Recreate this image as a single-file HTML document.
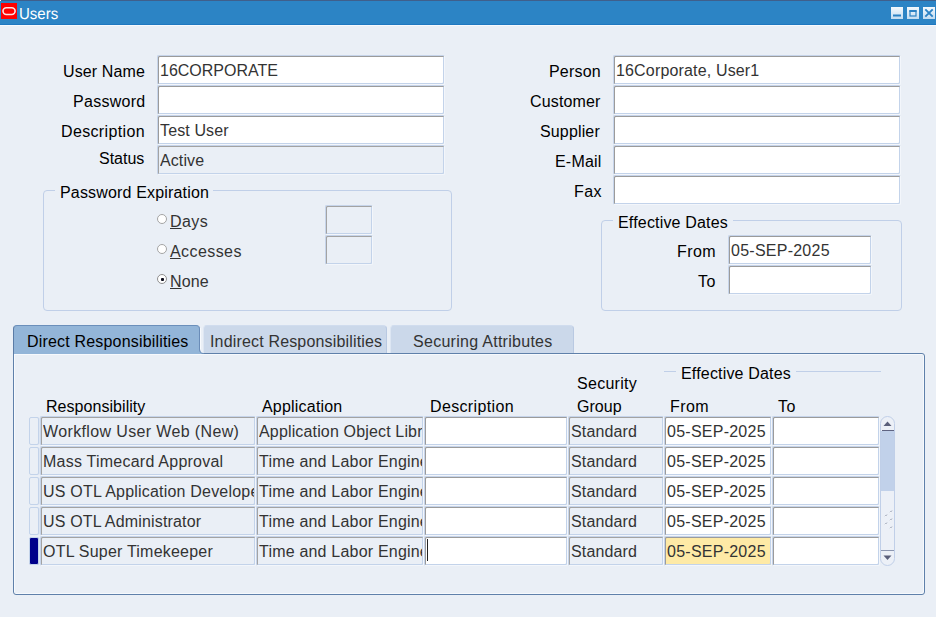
<!DOCTYPE html>
<html><head><meta charset="utf-8">
<style>
html,body{margin:0;padding:0;}
body{width:936px;height:617px;overflow:hidden;background:#eaeff6;font-family:"Liberation Sans",Arial,sans-serif;font-size:16px;color:#000;position:relative;}
.abs,.f,.l{position:absolute;}
#title{left:0;top:0;width:936px;height:25px;background:#2c84c5;border-top:1px solid #3f5f8c;border-bottom:1px solid #1f78c0;box-sizing:border-box;}
#titleline{left:0;top:25px;width:936px;height:1px;background:#f6f9fd;}
#title .txt{position:absolute;left:19px;top:4px;color:#fff;font-size:15px;line-height:18px;transform:rotate(0.03deg) scaleY(1.06);transform-origin:0 14px;}
.f{box-sizing:border-box;height:30px;border:1px solid;border-color:#c6d4ea #f3f6fb #f3f6fb #c6d4ea;border-radius:2px;background:#fff;color:#333;line-height:18px;padding:6px 0 0 2px;white-space:nowrap;overflow:hidden;box-shadow:inset 1px 1px 0 #9b9b9b, inset -1px -1px 0 #c3d3ea;}
.f.d{background:#eaeff6;box-shadow:inset 1px 1px 0 #a3a3a3, inset -1px -1px 0 #c3d3ea;}
.f.y{background:#feeaa6;}
.f span{display:block;overflow:hidden;margin-right:1px;}
.l{line-height:18px;white-space:nowrap;}
.grp{position:absolute;box-sizing:border-box;border:1px solid #c0cfe8;border-radius:4px;}
.gap{position:absolute;background:#eaeff6;height:3px;}
.radio{position:absolute;width:10px;height:10px;border:1px solid #a4a4a4;border-radius:50%;background:#fff;box-sizing:border-box;}
.radio.on{border-color:#8f8f8f;}
.radio.on::after{content:"";position:absolute;left:2.500px;top:2.500px;width:3px;height:3px;background:#0a0a1a;border-radius:1px;}
u{text-decoration:underline;letter-spacing:0;}
.tab{position:absolute;top:325px;height:28px;box-sizing:border-box;border:1px solid;border-color:#d0dcee #b9c9e2 #b9c9e2 #dde6f3;border-bottom:none;border-radius:4px 4px 0 0;background:#cbd8ea;}
.tab.act{background:#93b5d8;border-color:#6b8fbb #6a8cb8 #6a8cb8 #5b7ca6;height:29px;}
#panel{position:absolute;left:13px;top:353px;width:912px;height:242px;box-sizing:border-box;border:1px solid #5f80aa;border-radius:0 3px 3px 3px;box-shadow:inset 1px 1px 0 #f6f9fd, inset -1px -1px 0 #f6f9fd;}
.ind{position:absolute;left:29px;width:10px;height:28px;box-sizing:border-box;border:1px solid #c3d3ea;border-radius:2px;background:#eaeff6;box-shadow:1px 0 0 #dde6f3;}
.ind.cur{background:#00008b;}
</style></head><body>
<div class="abs" id="title"><svg class="abs" style="left:0;top:0" width="18" height="20" viewBox="0 0 18 20"><rect x="1" y="2" width="16" height="16" fill="#fe0000"/><rect x="3" y="6.700" width="12.100" height="6.800" rx="3.400" fill="none" stroke="#fbe3e3" stroke-width="1.600"/></svg><span class="txt">Users</span>
<svg class="abs" style="left:891px;top:6px" width="45" height="12" viewBox="0 0 45 12">
<defs><linearGradient id="g" x1="0" y1="0" x2="0" y2="1"><stop offset="0" stop-color="#f4f9fd"/><stop offset="1" stop-color="#c3dcf1"/></linearGradient></defs>
<rect x="0" y="0" width="12" height="12" fill="url(#g)"/><rect x="2" y="7.500" width="8" height="2" fill="#2c82c4"/>
<rect x="16" y="0" width="12" height="12" fill="url(#g)"/><rect x="19" y="4" width="6" height="5" fill="none" stroke="#2c82c4" stroke-width="1.200"/><rect x="18.400" y="3" width="7.200" height="2" fill="#2c82c4"/>
<rect x="32" y="0" width="12" height="12" fill="url(#g)"/><path d="M34.300 2.300 L41.700 9.700 M41.700 2.300 L34.300 9.700" stroke="#2c82c4" stroke-width="1.900" fill="none"/>
</svg>
</div>
<div class="abs" id="titleline"></div>
<div class="abs" style="left:0;top:0;width:1px;height:1px;background:#fff"></div>
<div class="l" style="left:63px;top:63px;letter-spacing:0.125px;">User Name</div>
<div class="l" style="left:73px;top:93px;letter-spacing:0.286px;">Password</div>
<div class="l" style="left:61px;top:123px;letter-spacing:0.35px;">Description</div>
<div class="l" style="left:99px;top:150px;">Status</div>
<div class="f " style="left:157px;top:55px;width:288px"><span>16CORPORATE</span></div>
<div class="f " style="left:157px;top:85px;width:288px"></div>
<div class="f " style="left:157px;top:115px;width:288px"><span style="letter-spacing:0.125px">Test User</span></div>
<div class="f d" style="left:157px;top:145px;width:288px"><span style="letter-spacing:0.1px">Active</span></div>
<div class="l" style="left:549px;top:63px;letter-spacing:0.2px;">Person</div>
<div class="l" style="left:530px;top:93px;letter-spacing:0.15px;">Customer</div>
<div class="l" style="left:540px;top:123px;letter-spacing:0.143px;">Supplier</div>
<div class="l" style="left:555px;top:153px;letter-spacing:0.2px;">E-Mail</div>
<div class="l" style="left:574px;top:183px;letter-spacing:0.45px;">Fax</div>
<div class="f " style="left:613px;top:55px;width:288px"><span style="letter-spacing:0.16px">16Corporate, User1</span></div>
<div class="f " style="left:613px;top:85px;width:288px"></div>
<div class="f " style="left:613px;top:115px;width:288px"></div>
<div class="f " style="left:613px;top:145px;width:288px"></div>
<div class="f " style="left:613px;top:175px;width:288px"></div>
<div class="grp" style="left:43px;top:190px;width:409px;height:121px"></div>
<div class="gap" style="left:55px;top:189px;width:158px"></div>
<div class="l" style="left:60px;top:184px;letter-spacing:0.167px;">Password Expiration</div>
<div class="radio" style="left:157px;top:214px"></div>
<div class="radio" style="left:157px;top:244px"></div>
<div class="radio on" style="left:157px;top:274px"></div>
<div class="l" style="left:170px;top:213px;letter-spacing:0.4px;color:#333;"><u style="margin-right:0.400px">D</u>ays</div>
<div class="l" style="left:170px;top:243px;letter-spacing:0.429px;color:#333;"><u style="margin-right:0.400px">A</u>ccesses</div>
<div class="l" style="left:170px;top:273px;letter-spacing:0.1px;color:#333;"><u style="margin-right:0.100px">N</u>one</div>
<div class="f d" style="left:325px;top:205px;width:48px"></div>
<div class="f d" style="left:325px;top:235px;width:48px"></div>
<div class="grp" style="left:601px;top:220px;width:301px;height:91px"></div>
<div class="gap" style="left:613px;top:219px;width:120px"></div>
<div class="l" style="left:618px;top:214px;letter-spacing:0.178px;">Effective Dates</div>
<div class="l" style="left:677px;top:243px;letter-spacing:0.45px;">From</div>
<div class="l" style="left:698px;top:273px;letter-spacing:0.45px;">To</div>
<div class="f " style="left:728px;top:235px;width:144px"><span style="letter-spacing:0.25px">05-SEP-2025</span></div>
<div class="f " style="left:728px;top:265px;width:144px"></div>
<div id="panel"></div>
<div class="tab act" style="left:13px;width:187px"></div>
<div class="tab" style="left:203px;width:184px"></div>
<div class="tab" style="left:390px;width:184px"></div>
<div class="abs" style="left:200px;top:328px;width:1px;height:22px;background:#f8fafd"></div>
<svg class="abs" style="left:199px;top:349px" width="5" height="5" viewBox="0 0 5 5"><path d="M0 0 L1 0 Q1 4 4.500 4.500 L4.500 5 L0 5 Z" fill="#93b5d8"/><path d="M0.500 0 Q0.500 4.500 4.500 4.500" fill="none" stroke="#6a8cb8" stroke-width="1"/></svg>
<div class="l" style="left:27px;top:333px;letter-spacing:0.181px;">Direct Responsibilities</div>
<div class="l" style="left:210px;top:333px;letter-spacing:0.167px;color:#333;">Indirect Responsibilities</div>
<div class="l" style="left:413px;top:333px;letter-spacing:0.278px;color:#333;">Securing Attributes</div>
<div class="l" style="left:46px;top:398px;letter-spacing:0.05px;">Responsibility</div>
<div class="l" style="left:262px;top:398px;letter-spacing:0.2px;">Application</div>
<div class="l" style="left:430px;top:398px;letter-spacing:0.35px;">Description</div>
<div class="l" style="left:577px;top:375px;letter-spacing:0.286px;">Security</div>
<div class="l" style="left:577px;top:398px;letter-spacing:0.05px;">Group</div>
<div class="abs" style="left:664px;top:371px;width:12px;height:1px;background:#c0cfe8"></div>
<div class="abs" style="left:796px;top:371px;width:85px;height:1px;background:#c0cfe8"></div>
<div class="l" style="left:681px;top:365px;letter-spacing:0.178px;">Effective Dates</div>
<div class="l" style="left:670px;top:398px;letter-spacing:0.45px;">From</div>
<div class="l" style="left:778px;top:398px;letter-spacing:0.45px;">To</div>
<div class="ind" style="top:417px"></div>
<div class="f d" style="left:40px;top:416px;width:216px"><span style="letter-spacing:0.364px">Workflow User Web (New)</span></div>
<div class="f d" style="left:256px;top:416px;width:168px"><span style="letter-spacing:0.155px">Application Object Library</span></div>
<div class="f " style="left:424px;top:416px;width:144px"></div>
<div class="f d" style="left:568px;top:416px;width:96px"><span style="letter-spacing:0.143px">Standard</span></div>
<div class="f " style="left:664px;top:416px;width:108px"><span style="letter-spacing:0.25px">05-SEP-2025</span></div>
<div class="f " style="left:772px;top:416px;width:108px"></div>
<div class="ind" style="top:447px"></div>
<div class="f d" style="left:40px;top:446px;width:216px"><span style="letter-spacing:0.238px">Mass Timecard Approval</span></div>
<div class="f d" style="left:256px;top:446px;width:168px"><span style="letter-spacing:0.2px">Time and Labor Engineering</span></div>
<div class="f " style="left:424px;top:446px;width:144px"></div>
<div class="f d" style="left:568px;top:446px;width:96px"><span style="letter-spacing:0.143px">Standard</span></div>
<div class="f " style="left:664px;top:446px;width:108px"><span style="letter-spacing:0.25px">05-SEP-2025</span></div>
<div class="f " style="left:772px;top:446px;width:108px"></div>
<div class="ind" style="top:477px"></div>
<div class="f d" style="left:40px;top:476px;width:216px"><span style="letter-spacing:0.2px">US OTL Application Developer</span></div>
<div class="f d" style="left:256px;top:476px;width:168px"><span style="letter-spacing:0.2px">Time and Labor Engineering</span></div>
<div class="f " style="left:424px;top:476px;width:144px"></div>
<div class="f d" style="left:568px;top:476px;width:96px"><span style="letter-spacing:0.143px">Standard</span></div>
<div class="f " style="left:664px;top:476px;width:108px"><span style="letter-spacing:0.25px">05-SEP-2025</span></div>
<div class="f " style="left:772px;top:476px;width:108px"></div>
<div class="ind" style="top:507px"></div>
<div class="f d" style="left:40px;top:506px;width:216px"><span style="letter-spacing:0.158px">US OTL Administrator</span></div>
<div class="f d" style="left:256px;top:506px;width:168px"><span style="letter-spacing:0.2px">Time and Labor Engineering</span></div>
<div class="f " style="left:424px;top:506px;width:144px"></div>
<div class="f d" style="left:568px;top:506px;width:96px"><span style="letter-spacing:0.143px">Standard</span></div>
<div class="f " style="left:664px;top:506px;width:108px"><span style="letter-spacing:0.25px">05-SEP-2025</span></div>
<div class="f " style="left:772px;top:506px;width:108px"></div>
<div class="ind cur" style="top:537px"></div>
<div class="f d" style="left:40px;top:536px;width:216px"><span style="letter-spacing:0.211px">OTL Super Timekeeper</span></div>
<div class="f d" style="left:256px;top:536px;width:168px"><span style="letter-spacing:0.2px">Time and Labor Engineering</span></div>
<div class="f " style="left:424px;top:536px;width:144px"></div>
<div class="f d" style="left:568px;top:536px;width:96px"><span style="letter-spacing:0.143px">Standard</span></div>
<div class="f y" style="left:664px;top:536px;width:108px"><span style="letter-spacing:0.25px">05-SEP-2025</span></div>
<div class="f " style="left:772px;top:536px;width:108px"></div>
<div class="abs" style="left:427px;top:539px;width:1px;height:22px;background:#222"></div>
<svg class="abs" style="left:880px;top:416px" width="15" height="150" viewBox="0 0 15 150">
<rect x="0.500" y="0.500" width="14" height="149" rx="7" fill="#ecf0f7" stroke="#c0cfe8"/>
<rect x="1" y="15" width="13" height="60" fill="#c1d1ea"/>
<rect x="2" y="14" width="12" height="1" fill="#5f6482"/>
<path d="M7.500 5.500 L11.500 10 L3.500 10 Z" fill="#5a5f7a"/>
<rect x="1" y="134" width="13" height="1" fill="#8c96b0"/>
<path d="M3.500 139.500 L11.500 139.500 L7.500 144 Z" fill="#5a5f7a"/>
<g stroke="#fff" stroke-width="1" fill="none"><path d="M10 97 l1.500 -1.500"/><path d="M5 101 l1.500 -1.500"/><path d="M10 105 l1.500 -1.500"/><path d="M5 109 l1.500 -1.500"/><path d="M10 113 l1.500 -1.500"/></g><g stroke="#7f889e" stroke-width="1" fill="none"><path d="M10.300 96.200 l1.500 -1.500"/><path d="M5.300 100.200 l1.500 -1.500"/><path d="M10.300 104.200 l1.500 -1.500"/><path d="M5.300 108.200 l1.500 -1.500"/><path d="M10.300 112.200 l1.500 -1.500"/></g>
</svg>
</body></html>
